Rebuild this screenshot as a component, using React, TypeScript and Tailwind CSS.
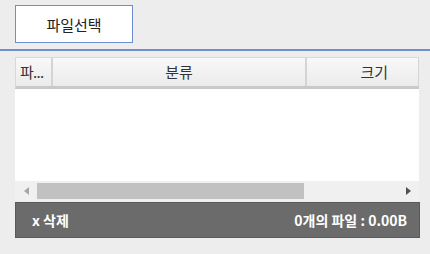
import React from 'react';

const font = { fontFamily: '"Noto Sans CJK KR", "Noto Sans", sans-serif' };

const App = () => {
  return (
    <div className="w-[430px] h-[254px] bg-[#ededed] overflow-hidden" style={font}>
      {/* toolbar */}
      <div className="h-[49px] pl-[15px] pt-[5px]">
        <button className="w-[118px] h-[38px] bg-white border border-[#6d8fd1] text-[15px] text-[#222] leading-none">
          파일선택
        </button>
      </div>
      <div className="h-[2px] bg-[#6f90cc]" />

      {/* grid */}
      <div className="ml-[15px] mt-[6px] w-[405px]">
        <div className="w-[404px] flex h-[32px] border-t border-l border-[#d9d9d9] bg-gradient-to-b from-[#f9f9f9] to-[#ebebeb] border-b-[3px] border-b-[#c9c9c9] text-[15px] text-[#333]">
          <div className="w-[37px] flex items-center pl-[4px] border-r-2 border-[#d4d4d4] tracking-tighter">파...</div>
          <div className="w-[254px] flex items-center justify-center border-r-2 border-[#d4d4d4]">분류</div>
          <div className="flex-1 flex items-center justify-end pr-[30px] border-r border-[#d4d4d4]">크기</div>
        </div>
        <div className="w-[404px] h-[92px] bg-white" />
        <div className="w-[404px] h-[20px] bg-[#f0f0f0] flex items-center">
          <div className="w-[22px] flex justify-center">
            <svg width="5" height="8" viewBox="0 0 5 8"><path d="M5 0 L0 4 L5 8 Z" fill="#a6a6a6" /></svg>
          </div>
          <div className="w-[267px] h-[16px] bg-[#c1c1c1]" />
          <div className="flex-1 flex justify-end pr-[8px]">
            <svg width="5" height="8" viewBox="0 0 5 8"><path d="M0 0 L5 4 L0 8 Z" fill="#505050" /></svg>
          </div>
        </div>
        <div className="mt-[1px] h-[36px] bg-[#6b6b6b] border border-[#5a5a5a] flex items-center justify-between pl-[16px] pr-[12px] text-white text-[14px] font-bold">
          <span>x 삭제</span>
          <span>0개의 파일 : 0.00B</span>
        </div>
      </div>
    </div>
  );
};

export default App;
